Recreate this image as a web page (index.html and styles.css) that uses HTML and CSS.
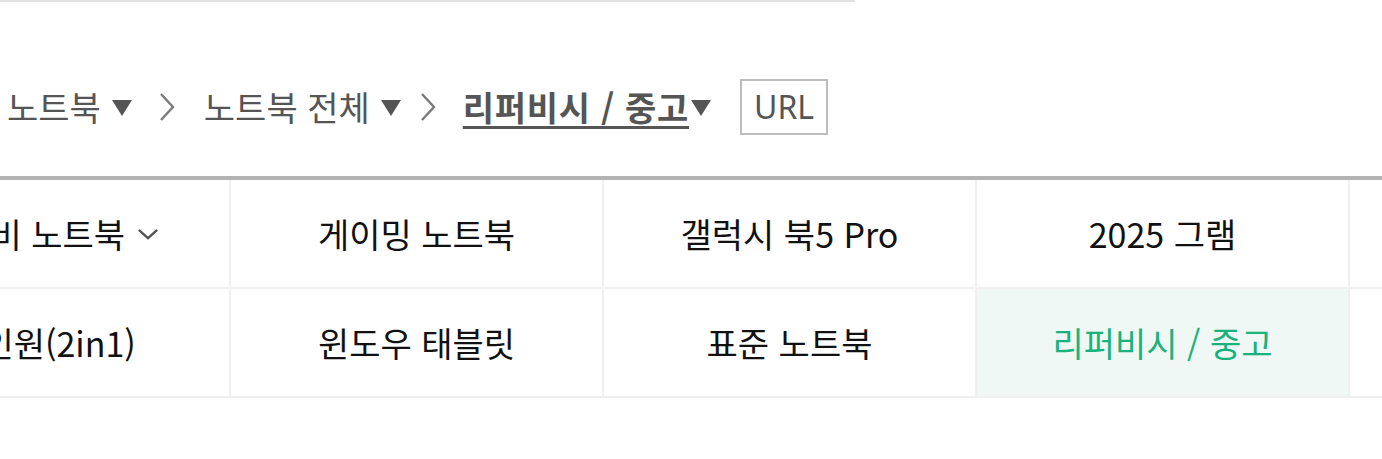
FILE: index.html
```html
<!DOCTYPE html>
<html lang="ko">
<head>
<meta charset="utf-8">
<link rel="stylesheet" href="styles.css">
</head>
<body>
<div class="topline"></div>
<nav class="crumbs">
  <span class="crumb">노트북<span class="tri"></span></span>
  <svg class="sep" viewBox="0 0 16 30" width="16" height="30"><path d="M2 2 L14 15 L2 28" fill="none" stroke="#7a7a7a" stroke-width="2.4"/></svg>
  <span class="crumb">노트북 전체<span class="tri"></span></span>
  <svg class="sep sep2" viewBox="0 0 16 30" width="16" height="30"><path d="M2 2 L14 15 L2 28" fill="none" stroke="#7a7a7a" stroke-width="2.4"/></svg>
  <span class="crumb current"><span class="cur-text">리퍼비시 / 중고</span><span class="tri"></span></span>
  <span class="url">URL</span>
</nav>
<div class="table-wrap">
  <table class="cats">
    <tr>
      <td><span class="with-chev">가성비 노트북<svg class="chev" viewBox="0 0 24 14" width="22" height="13"><path d="M2 2 L12 11 L22 2" fill="none" stroke="#555" stroke-width="2.6"/></svg></span></td>
      <td>게이밍 노트북</td>
      <td>갤럭시 북5 Pro</td>
      <td>2025 그램</td>
      <td></td>
    </tr>
    <tr>
      <td>투인원(2in1)</td>
      <td>윈도우 태블릿</td>
      <td>표준 노트북</td>
      <td class="active">리퍼비시 / 중고</td>
      <td></td>
    </tr>
  </table>
</div>
</body>
</html>
```
FILE: styles.css
```css
html, body {
  margin: 0;
  padding: 0;
  background: #fff;
  overflow: hidden;
}
body {
  font-family: "Noto Sans CJK KR", "Noto Sans", sans-serif;
  width: 1382px;
  height: 459px;
}
.topline {
  width: 855px;
  height: 2px;
  background: #e2e2e2;
}
.crumbs {
  display: flex;
  align-items: center;
  height: 56px;
  margin-top: 77px;
  padding-left: 7px;
  color: #555;
  font-size: 34px;
  line-height: 1;
  white-space: nowrap;
}
.crumb {
  display: flex;
  align-items: center;
}
.tri {
  display: inline-block;
  width: 0;
  height: 0;
  border-left: 10px solid transparent;
  border-right: 10px solid transparent;
  border-top: 16px solid #555;
  margin-left: 11px;
  margin-top: 2px;
}
.sep {
  margin: 0 29px 0 27px;
}
.sep2 {
  margin: 0 27px 0 19px;
}
.current {
  font-weight: 700;
}
.cur-text {
  letter-spacing: 0.7px;
  text-decoration: underline;
  text-decoration-thickness: 3px;
  text-underline-offset: 5px;
}
.current .tri {
  margin-left: 2px;
}
.url {
  margin-left: 29px;
  border: 2px solid #bdbdbd;
  box-sizing: border-box;
  padding: 0 12px;
  display: flex;
  align-items: center;
  font-family: "Noto Sans", sans-serif;
  font-size: 32px;
  color: #555;
  height: 56px;
}
.table-wrap {
  margin-top: 41px;
  margin-left: -144px;
}
.cats {
  border-collapse: collapse;
  table-layout: fixed;
  width: 1865px;
}
.cats td {
  width: 371px;
  height: 107px;
  border: 2px solid #f0f0f0;
  text-align: center;
  vertical-align: middle;
  font-size: 34px;
  color: #111;
  padding: 0;
}
.cats tr:first-child td {
  border-top: 4px solid #b3b3b3;
}
.with-chev {
  display: inline-flex;
  align-items: center;
}
.chev {
  margin-left: 12px;
  margin-top: 2px;
}
.cats td.active {
  background: #eff8f4;
  color: #1ab27c;
}
```
